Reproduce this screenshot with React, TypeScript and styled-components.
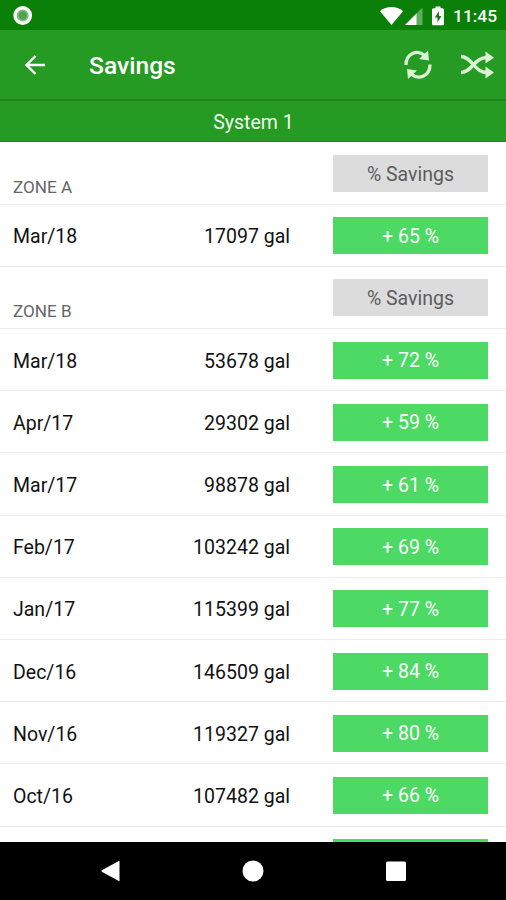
import React from 'react';
import styled, { createGlobalStyle } from 'styled-components';

const GlobalStyle = createGlobalStyle`
  * { box-sizing: border-box; }
  body { margin: 0; background: #fff; }
`;

const Screen = styled.div`
  width: 506px;
  height: 900px;
  display: flex;
  flex-direction: column;
  overflow: hidden;
  background: #fff;
  color: #111;
  font-family: Roboto, sans-serif;
  font-size: 19.5px;
`;

const StatusBar = styled.header`
  flex: none;
  height: 30px;
  display: flex;
  align-items: center;
  padding: 1px 8px 0 13px;
  background: #0a8009;
  color: #fff;
`;

const StatusIcons = styled.div`
  margin-left: auto;
  display: flex;
  align-items: center;
`;

const Clock = styled.span`
  width: 45px;
  margin-left: 7px;
  font-size: 17.4px;
  font-weight: 500;
  line-height: 28px;
  white-space: nowrap;
`;

const AppBar = styled.div`
  flex: none;
  height: 71px;
  display: flex;
  align-items: center;
  padding: 0 12px 0 24px;
  background: #259b24;
  border-bottom: 2px solid #20861f;
  color: #fff;
`;

const IconButton = styled.button`
  display: flex;
  padding: 0;
  border: 0;
  background: none;
  color: inherit;
`;

const Title = styled.h1`
  margin: 2px auto 0 43px;
  font-size: 24.6px;
  font-weight: 500;
  line-height: 30px;
`;

const Actions = styled.div`
  display: flex;
  gap: 27px;
  color: #d9f3d5;
`;

const SystemBar = styled.div`
  flex: none;
  height: 41px;
  display: flex;
  align-items: center;
  justify-content: center;
  padding: 2px 0 0 1px;
  background: #259b24;
  border-bottom: 1px solid #188c16;
  color: #f2fff0;
`;

const List = styled.main`
  flex: 1;
  min-height: 0;
  padding-top: 0.5px;
  overflow: hidden;
`;

const Row = styled.div<{ $header?: boolean }>`
  height: 62.2px;
  display: grid;
  grid-template-columns: 140px 137px 155px;
  align-items: ${p => (p.$header ? 'start' : 'center')};
  padding: ${p => (p.$header ? '12.5px' : '1px')} 0 0 13px;
  border-bottom: 1px solid #ededed;
  white-space: nowrap;
`;

const Zone = styled.h2`
  margin: 21px 0 0;
  font-size: 17.1px;
  font-weight: 400;
  line-height: 22px;
  color: #666;
`;

const Cell = styled.span<{ $right?: boolean }>`
  padding-top: 2px;
  text-align: ${p => (p.$right ? 'right' : 'left')};
`;

const Badge = styled.span<{ $muted?: boolean }>`
  grid-column: 3;
  width: 155px;
  height: 37px;
  margin-left: 43px;
  display: flex;
  align-items: center;
  justify-content: center;
  padding-top: 1px;
  background: ${p => (p.$muted ? '#dcdcdc' : '#4cd964')};
  color: ${p => (p.$muted ? '#5c5c5c' : '#fff')};
`;

const NavBar = styled.nav`
  flex: none;
  height: 58px;
  display: flex;
  align-items: center;
  justify-content: center;
  gap: 121px;
  padding-left: 2px;
  background: #000;
  color: #fff;
`;

const zones = [
  { name: 'ZONE A', rows: [['Mar/18', 17097, 65]] },
  {
    name: 'ZONE B',
    rows: [
      ['Mar/18', 53678, 72],
      ['Apr/17', 29302, 59],
      ['Mar/17', 98878, 61],
      ['Feb/17', 103242, 69],
      ['Jan/17', 115399, 77],
      ['Dec/16', 146509, 84],
      ['Nov/16', 119327, 80],
      ['Oct/16', 107482, 66],
    ],
  },
];

export default function App() {
  return (
    <Screen>
      <GlobalStyle />
      <StatusBar>
        <svg width="20" height="20" viewBox="0 0 20 20">
          <circle cx="9.700" cy="9.500" r="7.700" fill="#7fbd7d" stroke="#fff" strokeWidth="3.400" />
          <circle cx="9.700" cy="9.500" r="4.200" fill="#4ea34d" />
        </svg>
        <StatusIcons>
          <svg width="66" height="22" viewBox="0 0 66 22" fill="#fff">
            <path d="M0 6.2C6.5.7 16.5.7 23 6.2L11.5 20Z" />
            <path d="M42.5 2.5V20H25Z" opacity=".35" />
            <path d="M36.5 8.5V20H25Z" />
            <path d="M53.5 3.2h2V1.5h5v1.7h2q1.500 0 1.500 1.500v14q0 1.500-1.500 1.500h-9q-1.500 0-1.500-1.500v-14q0-1.500 1.500-1.500Z" />
            <path d="M59 6l-4.200 6.400h2.700V17.500l4-6.500H59Z" fill="#16761a" />
          </svg>
          <Clock>11:45</Clock>
        </StatusIcons>
      </StatusBar>
      <AppBar>
        <IconButton aria-label="Back">
          <svg width="22" height="22" viewBox="0 0 22 22" fill="none" stroke="currentColor" strokeWidth="2.400">
            <path d="M21 11H3M11.500 2L2.500 11l9 9" />
          </svg>
        </IconButton>
        <Title>Savings</Title>
        <Actions>
          <IconButton aria-label="Refresh">
            <svg width="30" height="32" viewBox="0 0 30 32" fill="none" stroke="currentColor" strokeWidth="3.300">
              <path d="M3 16C3 4.500 14 0 22 6.500M27 15.500C27 27 16 31.500 8 25" />
              <path d="M25 1.500L26 11.500L16 10ZM5 30L4 20L14 21.500Z" fill="currentColor" stroke="none" />
            </svg>
          </IconButton>
          <IconButton aria-label="Shuffle">
            <svg width="34" height="32" viewBox="0 0 34 32" fill="none" stroke="currentColor" strokeWidth="3.400">
              <path d="M1 7.500C12 7.500 14 23.500 27 23.500M1 23.500C12 23.500 14 8.500 27 8.500" />
              <path d="M25.500 2.500L34 8.700l-8.500 5.900ZM25.500 17.500L34 23.500l-8.500 6Z" fill="currentColor" stroke="none" />
            </svg>
          </IconButton>
        </Actions>
      </AppBar>
      <SystemBar>System 1</SystemBar>
      <List>
        {zones.map(zone => (
          <React.Fragment key={zone.name}>
            <Row $header>
              <Zone>{zone.name}</Zone>
              <Badge $muted>% Savings</Badge>
            </Row>
            {zone.rows.map(([month, gallons, saved]) => (
              <Row key={month}>
                <Cell>{month}</Cell>
                <Cell $right>{gallons} gal</Cell>
                <Badge>+ {saved} %</Badge>
              </Row>
            ))}
          </React.Fragment>
        ))}
        <Row>
          <Badge />
        </Row>
      </List>
      <NavBar>
        <svg width="20" height="22" viewBox="0 0 20 22" fill="currentColor">
          <path d="M18.500 1.200V20.800Q18.500 21.500 17.800 21.100L.800 11.800Q0 11 .800 10.300L17.800.900Q18.500.500 18.500 1.200Z" />
        </svg>
        <svg width="22" height="22" viewBox="0 0 22 22" fill="currentColor">
          <circle cx="11" cy="11" r="10.500" />
        </svg>
        <svg width="22" height="22" viewBox="0 0 22 22" fill="currentColor">
          <rect x="1" y="1.500" width="20" height="19.500" rx="1.500" />
        </svg>
      </NavBar>
    </Screen>
  );
}
